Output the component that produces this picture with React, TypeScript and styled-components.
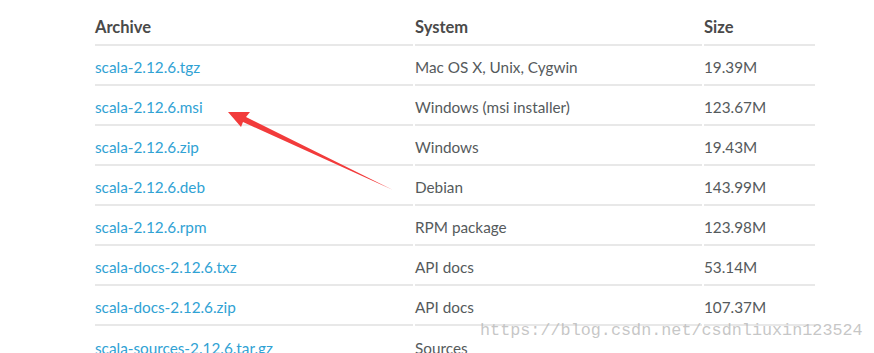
import React from 'react';
import styled, { createGlobalStyle } from 'styled-components';

const GlobalStyle = createGlobalStyle`
  html, body {
    margin: 0;
    padding: 0;
    background: #ffffff;
  }
  body {
    font-family: Lato, 'Open Sans', sans-serif;
  }
`;

const Page = styled.div`
  position: relative;
  width: 874px;
  height: 353px;
  overflow: hidden;
  background: #fff;
`;

const Grid = styled.div`
  display: grid;
  grid-template-columns: 318px 287px 111px;
  column-gap: 2px;
  margin-left: 95px;
`;

const HeadCell = styled.div`
  box-sizing: border-box;
  height: 46px;
  padding-top: 10px;
  display: flex;
  align-items: center;
  border-bottom: 2px solid #e8e8e8;
  font-size: 16.5px;
  font-weight: 700;
  color: #4a4a4a;
`;

const Cell = styled.div<{ $last?: boolean }>`
  box-sizing: border-box;
  height: 40px;
  padding-top: 4px;
  display: flex;
  align-items: center;
  border-bottom: ${(p) => (p.$last ? 'none' : '2px solid #e8e8e8')};
  font-size: 15.3px;
  color: #555a5c;
  white-space: nowrap;
`;

const FileLink = styled.a`
  color: #30a2d4;
  text-decoration: none;
`;

const Watermark = styled.div`
  position: absolute;
  left: 480px;
  top: 321px;
  font-family: 'Liberation Mono', 'DejaVu Sans Mono', monospace;
  font-size: 16.8px;
  color: rgba(180, 180, 180, 0.75);
  white-space: nowrap;
  pointer-events: none;
`;

const ArrowLayer = styled.svg`
  position: absolute;
  left: 0;
  top: 0;
  pointer-events: none;
`;

const rows = [
  { file: 'scala-2.12.6.tgz', system: 'Mac OS X, Unix, Cygwin', size: '19.39M' },
  { file: 'scala-2.12.6.msi', system: 'Windows (msi installer)', size: '123.67M' },
  { file: 'scala-2.12.6.zip', system: 'Windows', size: '19.43M' },
  { file: 'scala-2.12.6.deb', system: 'Debian', size: '143.99M' },
  { file: 'scala-2.12.6.rpm', system: 'RPM package', size: '123.98M' },
  { file: 'scala-docs-2.12.6.txz', system: 'API docs', size: '53.14M' },
  { file: 'scala-docs-2.12.6.zip', system: 'API docs', size: '107.37M' },
  { file: 'scala-sources-2.12.6.tar.gz', system: 'Sources', size: '' },
];

const App: React.FC = () => {
  return (
    <Page>
      <GlobalStyle />
      <Grid>
        <HeadCell>Archive</HeadCell>
        <HeadCell>System</HeadCell>
        <HeadCell>Size</HeadCell>
        {rows.map((r, i) => {
          const last = i === rows.length - 1;
          return (
            <React.Fragment key={r.file}>
              <Cell $last={last}>
                <FileLink href="#">{r.file}</FileLink>
              </Cell>
              <Cell $last={last}>{r.system}</Cell>
              <Cell $last={last}>{r.size}</Cell>
            </React.Fragment>
          );
        })}
      </Grid>
      <ArrowLayer width="874" height="353" viewBox="0 0 874 353">
        <polygon
          points="228,112 250,112 246,117 393,190 243,122 241,127"
          fill="#f23b3b"
        />
      </ArrowLayer>
      <Watermark>https://blog.csdn.net/csdnliuxin123524</Watermark>
    </Page>
  );
};

export default App;
